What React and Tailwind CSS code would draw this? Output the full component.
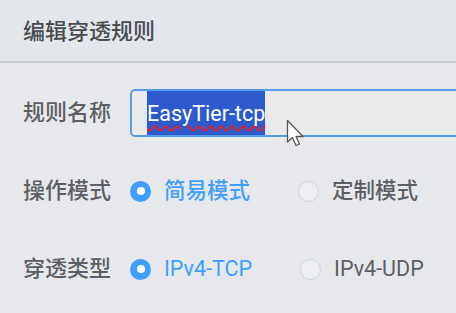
import React from 'react';

const font = { fontFamily: 'Roboto, "Noto Sans CJK SC", sans-serif' };

function Radio({ checked, label, latin }) {
  return (
    <label className="flex items-center gap-[13px] cursor-pointer">
      {checked ? (
        <span className="w-[21px] h-[21px] shrink-0 rounded-full bg-[#409eff] flex items-center justify-center">
          <span className="w-[8px] h-[8px] rounded-full bg-white" />
        </span>
      ) : (
        <span className="w-[21px] h-[21px] shrink-0 rounded-full border border-[#cfd3da] bg-[#eceef1]" />
      )}
      <span className={`text-[21.5px] leading-none whitespace-nowrap ${latin ? 'font-normal' : 'font-medium'} ${checked ? 'text-[#409eff]' : 'text-[#5c5e63]'}`}>{label}</span>
    </label>
  );
}

function Row({ label, children }) {
  return (
    <div className="flex items-center h-[48px]">
      <div className="w-[107px] shrink-0 text-[22px] font-medium text-[#5c5e63] leading-none">{label}</div>
      <div className="flex items-center">{children}</div>
    </div>
  );
}

export default function App() {
  return (
    <div style={font} className="relative w-[456px] h-[313px] overflow-hidden bg-gradient-to-b from-[#e8e9eb] to-[#e6e8ec]">
      <div className="h-[63px] flex items-center pt-[3px] px-[23px] bg-[#e3e7ec] border-b-2 border-[#c9cbce]">
        <h2 className="text-[22px] font-medium text-[#4a4c50] leading-none">编辑穿透规则</h2>
      </div>
      <div className="pl-[23px] pt-[26px] flex flex-col gap-[30px]">
        <Row label="规则名称">
          <div className="h-[48px] w-[340px] shrink-0 border-2 border-[#5a9cec] rounded-[5px] pl-[15px] flex items-stretch bg-[#e9eaec]">
            <span className="bg-[#2d5bcd] text-white text-[21.5px] flex items-center pt-[2px] underline decoration-wavy decoration-[#e0202a] decoration-[1.5px] underline-offset-[4px]">
              EasyTier-tcp
            </span>
          </div>
        </Row>
        <Row label="操作模式">
          <div className="flex items-center gap-[48px]">
            <Radio checked label="简易模式" />
            <Radio label="定制模式" />
          </div>
        </Row>
        <Row label="穿透类型">
          <div className="flex items-center gap-[48px]">
            <Radio checked latin label="IPv4-TCP" />
            <Radio latin label="IPv4-UDP" />
          </div>
        </Row>
      </div>
      <svg className="absolute left-[286px] top-[119px]" width="20" height="30" viewBox="0 0 20 30">
        <path d="M1.5 1.5 L1.5 23 L6.5 18.5 L10 26.5 L13.5 25 L10 17.5 L17 17.5 Z" fill="#fff" stroke="#555" strokeWidth="1.3" strokeLinejoin="round" />
      </svg>
    </div>
  );
}
